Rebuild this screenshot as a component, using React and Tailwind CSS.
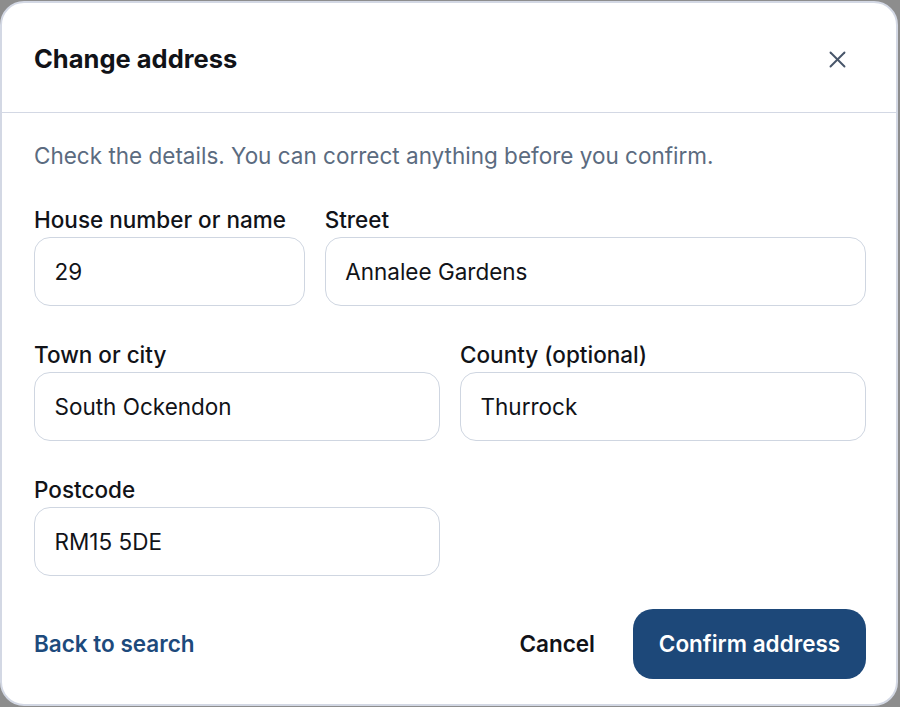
export default function App() {
  const font = { fontFamily: 'Inter, "Noto Sans", sans-serif' };
  const Field = ({ label, value }) => (
    <div className="flex flex-col">
      <label className="text-[22.5px] leading-[31px] font-medium text-[#111318] mb-[2px]">{label}</label>
      <div className="h-[69px] rounded-[16px] border-[1.5px] border-[#cfd6e1] bg-white flex items-center px-[19.5px] text-[22.5px] text-[#111318]">
        {value}
      </div>
    </div>
  );
  return (
    <div className="w-[900px] h-[707px] bg-[#8d8d8d] pt-[1px] pr-[2px] pb-[1px]" style={font}>
      <div className="w-full h-full bg-white rounded-[24px] border-2 border-[#d3d8e4] flex flex-col overflow-hidden">
        <div className="h-[110px] shrink-0 border-b-[1.5px] border-[#d3d8e4] flex items-center justify-between pl-[32px] pr-[50px] pt-[3px]">
          <h2 className="text-[25.5px] leading-[34px] font-bold text-[#111318]">Change address</h2>
          <svg width="17" height="17" viewBox="0 0 17 17" fill="none" stroke="#475569" strokeWidth="1.9" strokeLinecap="round">
            <line x1="1.5" y1="1.5" x2="15.5" y2="15.5" />
            <line x1="15.5" y1="1.5" x2="1.5" y2="15.5" />
          </svg>
        </div>
        <div className="pl-[32px] pr-[30px] pt-[28px] flex flex-col">
          <p className="text-[22.5px] leading-[30px] text-[#5b6b80] mb-[33px]">
            Check the details. You can correct anything before you confirm.
          </p>
          <div className="grid grid-cols-[1fr_2fr] gap-x-[20px]">
            <Field label="House number or name" value="29" />
            <Field label="Street" value="Annalee Gardens" />
          </div>
          <div className="grid grid-cols-2 gap-x-[20px] mt-[33px]">
            <Field label="Town or city" value="South Ockendon" />
            <Field label="County (optional)" value="Thurrock" />
          </div>
          <div className="grid grid-cols-2 gap-x-[20px] mt-[33px]">
            <Field label="Postcode" value="RM15 5DE" />
          </div>
          <div className="flex items-center justify-between mt-[33px]">
            <a className="text-[22.5px] font-semibold text-[#1d4a7c]">Back to search</a>
            <div className="flex items-center gap-[38px]">
              <button className="text-[22.5px] font-semibold text-[#111318]">Cancel</button>
              <button className="h-[70px] w-[233px] rounded-[20px] bg-[#1d4879] text-white text-[22.5px] font-semibold">
                Confirm address
              </button>
            </div>
          </div>
        </div>
      </div>
    </div>
  );
}
